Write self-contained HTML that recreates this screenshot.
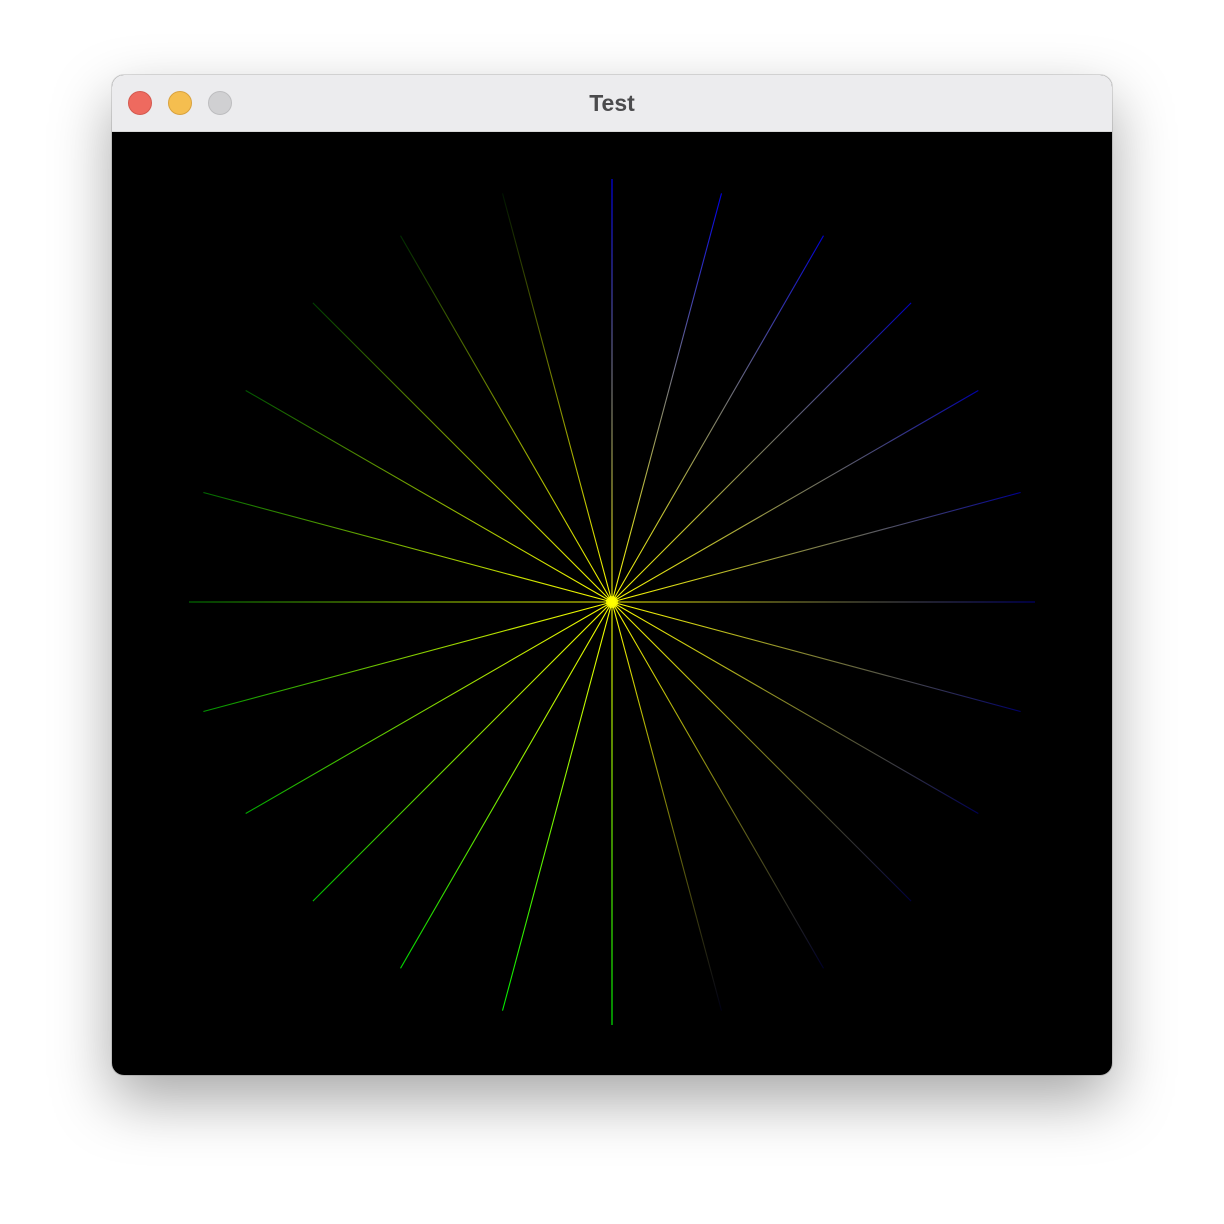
<!DOCTYPE html>
<html><head><meta charset="utf-8"><style>
html,body{margin:0;padding:0;background:#fff;width:1224px;height:1224px;overflow:hidden}
.win{position:absolute;left:112px;top:75px;width:1000px;height:1000px;border-radius:12px;overflow:hidden;
box-shadow:0 25px 60px rgba(0,0,0,0.35),0 0 0 1px rgba(0,0,0,0.12);background:#000}
.tb{position:absolute;left:0;top:0;width:1000px;height:57px;background:#ececee;border-bottom:1px solid #d8d8d8;box-sizing:border-box}
.tb .t{position:absolute;left:0;right:0;top:0;font:bold 23px "Liberation Sans",sans-serif;line-height:57px;text-align:center;color:#4b4b4d}
.d{position:absolute;top:16px;width:24px;height:24px;border-radius:50%;box-sizing:border-box}
svg{position:absolute;left:0;top:57px}
</style></head><body>
<div class="win">
<div class="tb"><div class="t">Test</div>
<div class="d" style="left:16px;background:#ee6a5f;border:1px solid #d4594f"></div>
<div class="d" style="left:56px;background:#f5be4f;border:1px solid #d9a23e"></div>
<div class="d" style="left:96px;background:#d0d0d2;border:1px solid #bdbdbf"></div>
</div>
<svg id="s" width="1000" height="943" xmlns="http://www.w3.org/2000/svg"></svg>
</div>
<script>
var s=document.getElementById('s'),cx=500,cy=470,r=423,html='<defs>',ls='';
for(var i=0;i<24;i++){
 var a=i*15,t=a*Math.PI/180,x=cx+r*Math.sin(t),y=cy-r*Math.cos(t),col;
 if(a<180){var f=1-a/180;col='rgb(0,0,'+Math.round(255*f)+')';}
 else{var f=1-(a-180)/180;col='rgb(0,'+Math.round(255*f)+',0)';}
 html+='<linearGradient id="g'+i+'" gradientUnits="userSpaceOnUse" x1="'+cx+'" y1="'+cy+'" x2="'+x.toFixed(1)+'" y2="'+y.toFixed(1)+'"><stop offset="0" stop-color="#ffff00"/><stop offset="1" stop-color="'+col+'"/></linearGradient>';
 ls+='<line x1="'+cx+'" y1="'+cy+'" x2="'+x.toFixed(1)+'" y2="'+y.toFixed(1)+'" stroke="url(#g'+i+')" stroke-width="1.1"/>';
}
s.innerHTML=html+'</defs>'+ls+'<circle cx="500" cy="470" r="6" fill="#ffff00" opacity="0.8"/>';
</script>
</body></html>
